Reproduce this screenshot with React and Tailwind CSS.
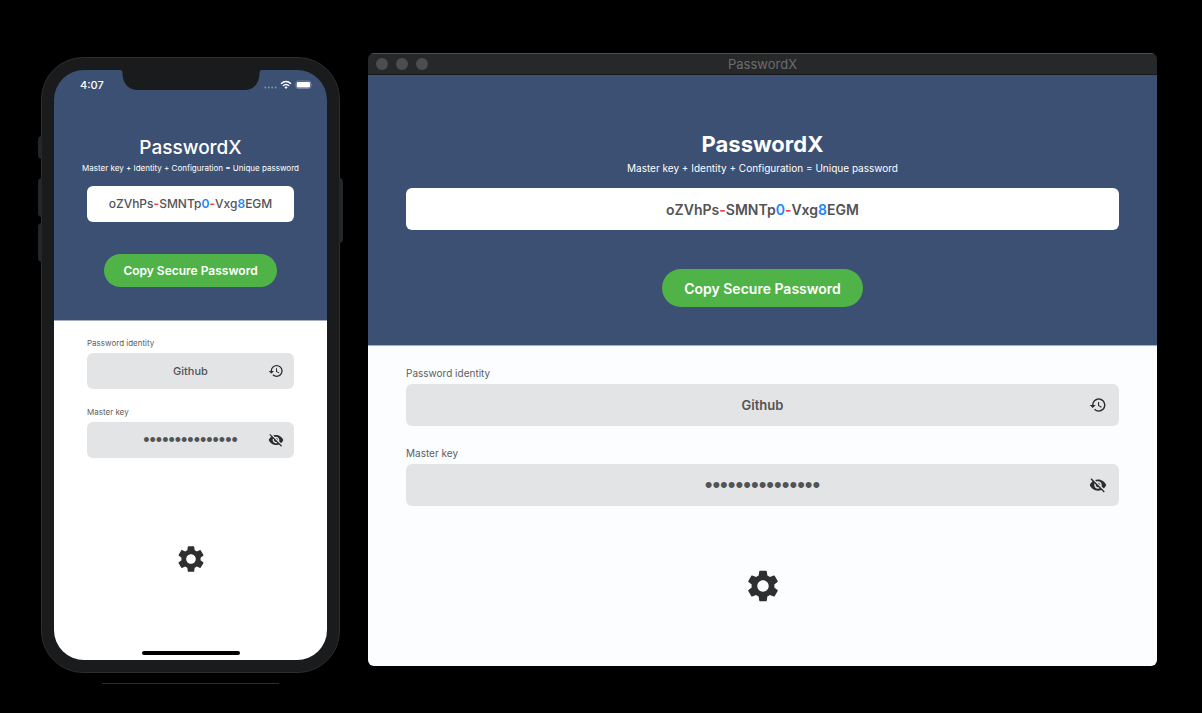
import { MdHistory, MdSettings, MdVisibilityOff } from "react-icons/md";

const PHONE = {
  id: "phone",
  header: "px-[33px] pt-[36px] pb-[33px]",
  title: "text-[19px] leading-6 font-medium",
  subtitle: "mt-0.5 text-[8px] leading-3",
  output: "mt-3 h-9 rounded-md text-[12px] font-medium",
  copy: "mt-8 h-[33px] px-[19px] text-[12px] font-semibold",
  body: "px-[33px] pt-4 bg-white",
  fields: "gap-[17px]",
  label: "text-[8px] leading-3",
  input: "h-9 rounded-md text-[11px] font-medium",
  secret: "h-9 rounded-md text-[18px] font-['Liberation_Sans',sans-serif]",
  iconButton: "right-[10px]",
  icon: 16,
  settings: "mt-[85px]",
  gear: 32,
};

const DESKTOP = {
  id: "desktop",
  header: "px-[38px] pt-[55px] pb-[38px]",
  title: "text-[22px] leading-7 font-bold",
  subtitle: "mt-1 text-[10px] leading-3",
  output: "mt-[14px] h-[42px] rounded-md text-[14px] font-semibold",
  copy: "mt-[39px] h-[38px] px-[22px] text-[14px] font-semibold",
  body: "px-[38px] pt-5 pb-[61px] bg-[#fcfdff]",
  fields: "gap-5",
  label: "text-[10px] leading-[14px]",
  input: "h-[42px] rounded-md text-[13px] font-semibold",
  secret: "h-[42px] rounded-md text-[22px] font-['Liberation_Sans',sans-serif]",
  iconButton: "right-3",
  icon: 18,
  settings: "mt-[61px]",
  gear: 38,
};

const PASSWORD = "oZVhPs-SMNTp0-Vxg8EGM";

function charColor(char) {
  if (/[0-9]/.test(char)) return "font-semibold text-[#1a87fb]";
  if (/[a-zA-Z]/.test(char)) return "";
  return "font-bold text-[#f0413c]";
}

function Password({ value }) {
  const parts = value.match(/[a-zA-Z]+|[0-9]+|[^a-zA-Z0-9]+/g);
  return parts.map((part, i) => (
    <span key={i} className={charColor(part[0])}>{part}</span>
  ));
}

function Field({ size, name, label, type, value, Icon, action }) {
  const id = `${size.id}-${name}`;
  const box = type === "password" ? size.secret : size.input;
  return (
    <div>
      <label htmlFor={id} className={`block text-[#5b5d60] ${size.label}`}>{label}</label>
      <div className="relative mt-1 flex items-center">
        <input
          id={id}
          type={type}
          defaultValue={value}
          className={`w-full min-w-0 bg-[#e3e4e6] px-8 text-center text-[#525355] outline-none ${box}`}
        />
        <button type="button" aria-label={action} className={`absolute text-[#2b2c2e] ${size.iconButton}`}>
          <Icon size={size.icon} />
        </button>
      </div>
    </div>
  );
}

function PasswordForm({ size }) {
  return (
    <>
      <section className={`flex flex-col items-center bg-[#3c5073] text-white ${size.header}`}>
        <h1 className={size.title}>PasswordX</h1>
        <p className={`whitespace-nowrap ${size.subtitle}`}>
          Master key + Identity + Configuration = Unique password
        </p>
        <output className={`flex w-full items-center justify-center bg-white text-[#525355] ${size.output}`}>
          <Password value={PASSWORD} />
        </output>
        <button type="button" className={`rounded-full bg-[#50b347] whitespace-nowrap ${size.copy}`}>
          Copy Secure Password
        </button>
      </section>
      <section className={`flex grow flex-col border-t border-[#a4aebf] ${size.body}`}>
        <div className={`flex flex-col ${size.fields}`}>
          <Field size={size} name="identity" label="Password identity" type="text" value="Github" Icon={MdHistory} action="History" />
          <Field size={size} name="key" label="Master key" type="password" value="correcthorse123" Icon={MdVisibilityOff} action="Show master key" />
        </div>
        <button type="button" aria-label="Settings" className={`self-center text-[#2e2f31] ${size.settings}`}>
          <MdSettings size={size.gear} />
        </button>
      </section>
    </>
  );
}

function StatusBar() {
  return (
    <div className="relative flex h-[30px] items-center justify-between bg-[#3c5073] pr-[15px] pl-[26px] text-white">
      <span className="text-[11px] leading-4 font-medium">4:07</span>
      <svg className="absolute top-0 left-1/2 -translate-x-1/2" width="142" height="20" viewBox="0 0 142 20" fill="#191b1c" aria-hidden="true">
        <path d="M0 0H142Q139.500 0 139.500 3C139.500 13 134 20 124 20H18C8 20 2.500 13 2.500 3Q2.500 0 0 0Z" />
      </svg>
      <svg width="48" height="10" viewBox="0 0 48 10" aria-hidden="true">
        <g fill="#8391aa">
          <circle cx="1.200" cy="7.500" r="1" />
          <circle cx="4.700" cy="7.500" r="1" />
          <circle cx="8.200" cy="7.500" r="1" />
          <circle cx="11.700" cy="7.500" r="1" />
        </g>
        <g fill="none" stroke="#fff" strokeWidth="1.500">
          <path d="M17 3.700Q22 -0.600 27 3.700" />
          <path d="M18.900 5.800Q22 3.200 25.100 5.800" />
        </g>
        <path d="M20.300 7.100Q22 5.800 23.700 7.100L22 8.900Z" fill="#fff" />
        <rect x="31.900" y="1" width="15" height="7.500" rx="2.200" fill="none" stroke="#8391aa" strokeWidth="0.800" />
        <rect x="32.800" y="1.900" width="13.200" height="5.700" rx="1.300" fill="#fff" />
        <path d="M47.400 3.500Q48.500 4.700 47.400 6Z" fill="#8391aa" />
      </svg>
    </div>
  );
}

function Phone() {
  return (
    <div className="mt-1 shrink-0">
      <div className="relative w-[299px] rounded-[42px] border border-[#2b2d2e] bg-[#191b1c] p-3">
        <span className="absolute top-[78px] -left-1 h-[23px] w-1 rounded-l-sm bg-[#242627]" />
        <span className="absolute top-[120px] -left-1 h-[39px] w-1 rounded-l-sm bg-[#242627]" />
        <span className="absolute top-[165px] -left-1 h-[39px] w-1 rounded-l-sm bg-[#242627]" />
        <span className="absolute top-[120px] -right-1 h-[65px] w-1 rounded-r-sm bg-[#242627]" />
        <div className="flex flex-col overflow-hidden rounded-[30px]">
          <StatusBar />
          <PasswordForm size={PHONE} />
          <div className="flex justify-center bg-white pt-[76px] pb-[5px]">
            <div className="h-1 w-[98px] rounded-full bg-black" />
          </div>
        </div>
      </div>
      <div className="mx-auto mt-[10px] h-px w-[177px] bg-[#2b2d2e]" />
    </div>
  );
}

function DesktopWindow() {
  return (
    <div className="flex min-w-0 grow flex-col overflow-hidden rounded-md">
      <div className="grid h-[22px] grid-cols-[1fr_auto_1fr] items-center border-t border-b border-t-[#4d4e4f] border-b-[#17191b] bg-[#262829] px-2">
        <div className="flex gap-2">
          <span className="size-3 rounded-full bg-[#4c4d4e]" />
          <span className="size-3 rounded-full bg-[#4c4d4e]" />
          <span className="size-3 rounded-full bg-[#4c4d4e]" />
        </div>
        <span className="text-[13px] leading-5 text-[#6c6d6e]">PasswordX</span>
      </div>
      <PasswordForm size={DESKTOP} />
    </div>
  );
}

export default function App() {
  return (
    <main className="flex min-h-screen items-start gap-7 bg-black pt-[53px] pr-[45px] pb-6 pl-[41px] font-['Inter',sans-serif]">
      <Phone />
      <DesktopWindow />
    </main>
  );
}
